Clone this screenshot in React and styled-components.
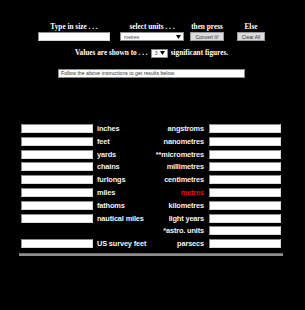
import React from 'react';
import styled, { createGlobalStyle } from 'styled-components';

const Global = createGlobalStyle`
  html, body { margin: 0; padding: 0; background: #000; }
  body { width: 305px; height: 310px; overflow: hidden; }
`;

const leftUnits = ['inches', 'feet', 'yards', 'chains', 'furlongs', 'miles', 'fathoms', 'nautical miles', '', 'US survey feet'];
const rightUnits = ['angstroms', 'nanometres', '**micrometres', 'millimetres', 'centimetres', 'metres', 'kilometres', 'light years', '*astro. units', 'parsecs'];

const App = () => {
  return (
    <>
      <Global />
      <Page>
        <Header>
          <Col $ml={0}>
            <Head>Type in size . . .</Head>
            <Field $w={72} />
          </Col>
          <Col $ml={10}>
            <Head>select units . . .</Head>
            <Select $w={64}>
              <span>metres</span>
              <Arrow />
            </Select>
          </Col>
          <Col $ml={6}>
            <Head>then press</Head>
            <Button $w={34}>Convert It!</Button>
          </Col>
          <Col $ml={13}>
            <Head>Else</Head>
            <Button $w={28}>Clear All</Button>
          </Col>
        </Header>

        <ValuesRow>
          <Head>Values are shown to . . .</Head>
          <Select $w={17}>
            <span>3</span>
            <Arrow />
          </Select>
          <Head>significant figures.</Head>
        </ValuesRow>

        <Results>Follow the above instructions to get results below.</Results>

        <Table>
          {leftUnits.map((l, i) => (
            <React.Fragment key={i}>
              {l ? <Field $w={72} /> : <span />}
              <Unit>{l}</Unit>
              <Unit $right $red={rightUnits[i] === 'metres'}>{rightUnits[i]}</Unit>
              <Field $w={72} />
            </React.Fragment>
          ))}
        </Table>
        <Rule />
      </Page>
    </>
  );
};

const Arrow = () => (
  <svg width="5" height="4" viewBox="0 0 5 4">
    <path d="M0 0 H5 L2.5 4 Z" fill="#000" />
  </svg>
);

const Page = styled.div`
  padding-top: 22px;
  display: flex;
  flex-direction: column;
  align-items: center;
`;

const Header = styled.div`
  display: flex;
  align-items: flex-end;
  margin-right: 2px;
`;

const Col = styled.div`
  display: flex;
  flex-direction: column;
  align-items: center;
  margin-left: ${p => p.$ml}px;
`;

const Head = styled.span`
  font-family: "Liberation Serif", "Times New Roman", serif;
  font-weight: bold;
  font-size: 7.3px;
  line-height: 10px;
  color: #fff;
  white-space: nowrap;
`;

const Field = styled.div`
  width: ${p => p.$w}px;
  height: 9px;
  box-sizing: border-box;
  background: #fff;
  border: 1px solid #8c8c8c;
  border-right-color: #d8d8d8;
  border-bottom-color: #d8d8d8;
`;

const Select = styled.div`
  width: ${p => p.$w}px;
  height: 9px;
  box-sizing: border-box;
  background: #fff;
  border: 1px solid #8c8c8c;
  display: flex;
  align-items: center;
  justify-content: space-between;
  padding: 0 2px 0 3px;
  font-family: "Liberation Sans", Arial, sans-serif;
  font-size: 5px;
  color: #444;
`;

const Button = styled.div`
  width: ${p => p.$w}px;
  height: 9px;
  box-sizing: border-box;
  background: #dcdcdc;
  border: 1px solid #9a9a9a;
  display: flex;
  align-items: center;
  justify-content: center;
  font-family: "Liberation Sans", Arial, sans-serif;
  font-size: 5px;
  color: #333;
  white-space: nowrap;
`;

const ValuesRow = styled.div`
  display: flex;
  align-items: center;
  gap: 3px;
  margin-top: 7px;
  margin-right: 2px;
`;

const Results = styled.div`
  margin-top: 11px;
  margin-right: 2px;
  width: 187px;
  height: 9px;
  box-sizing: border-box;
  background: #fff;
  border: 1px solid #8c8c8c;
  padding-left: 2px;
  font-family: "Liberation Sans", Arial, sans-serif;
  font-size: 5.2px;
  line-height: 7px;
  color: #333;
  white-space: nowrap;
`;

const Table = styled.div`
  margin-top: 46px;
  margin-right: 3px;
  display: grid;
  grid-template-columns: 72px 57px 59px 72px;
  grid-auto-rows: 9px;
  row-gap: 3.8px;
  align-items: center;
`;

const Unit = styled.span`
  font-family: "Liberation Sans", Arial, sans-serif;
  font-weight: bold;
  font-size: 7.4px;
  letter-spacing: -0.15px;
  line-height: 9px;
  white-space: nowrap;
  color: ${p => (p.$red ? '#e01010' : '#f2f2f2')};
  text-align: ${p => (p.$right ? 'right' : 'left')};
  padding-left: ${p => (p.$right ? 0 : 4)}px;
  padding-right: ${p => (p.$right ? 5 : 0)}px;
`;

const Rule = styled.div`
  margin-top: 5px;
  margin-right: 3px;
  width: 264px;
  height: 2px;
  background: #8e8e8e;
  border-top: 1px solid #6e6e6e;
`;

export default App;
